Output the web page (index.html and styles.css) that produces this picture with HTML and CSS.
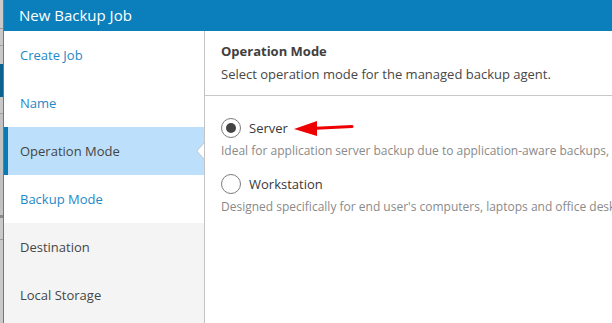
FILE: index.html
```html
<!DOCTYPE html>
<html>
<head>
<meta charset="utf-8">
<link rel="stylesheet" href="styles.css">
</head>
<body>
<div class="backdrop"></div>
<div class="modal">
  <div class="modal-header">New Backup Job</div>
  <div class="modal-body">
    <nav class="steps">
      <div class="step done">Create Job</div>
      <div class="step done">Name</div>
      <div class="step active">Operation Mode
        <svg class="notch" width="8" height="18" viewBox="0 0 8 18"><polygon points="8.5,0.5 0.8,9 8.5,17.5" fill="#fff" stroke="#c4c4c4" stroke-width="1"/></svg>
      </div>
      <div class="step done">Backup Mode</div>
      <div class="step">Destination</div>
      <div class="step">Local Storage</div>
    </nav>
    <section class="panel">
      <div class="panel-head">
        <div class="panel-title">Operation Mode</div>
        <div class="panel-sub">Select operation mode for the managed backup agent.</div>
      </div>
      <div class="options">
        <div class="option">
          <div class="radio-row">
            <span class="radio checked"></span>
            <span class="radio-label">Server</span>
            <svg class="arrow" width="60" height="18" viewBox="0 0 60 18"><path d="M58 7.6 L22 9.3" stroke="#ee0000" stroke-width="3" stroke-linecap="round" fill="none"/><polygon points="0,10 23,2 23,17" fill="#ee0000"/></svg>
          </div>
          <div class="desc">Ideal for application server backup due to application-aware backups, log truncation and automatic retries.</div>
        </div>
        <div class="option">
          <div class="radio-row">
            <span class="radio"></span>
            <span class="radio-label">Workstation</span>
          </div>
          <div class="desc">Designed specifically for end user's computers, laptops and office desktops.</div>
        </div>
      </div>
    </section>
  </div>
</div>
</body>
</html>
```

FILE: styles.css
```css
html, body {
  margin: 0;
  padding: 0;
  height: 100%;
}
body {
  display: flex;
  width: 612px;
  height: 323px;
  overflow: hidden;
  font-family: "Open Sans", "Liberation Sans", sans-serif;
  background: #fff;
}
.backdrop {
  width: 3px;
  flex: none;
  background: linear-gradient(to bottom,
    #c9c9c9 0, #c9c9c9 28px, #9a9a9a 28px, #9a9a9a 29px, #c9c9c9 29px,
    #c9c9c9 45px, #a0a0a0 45px, #a0a0a0 46px, #c9c9c9 46px,
    #c9c9c9 64px, #0b628e 64px, #0b628e 97px, #c9c9c9 97px,
    #c9c9c9 113px, #a0a0a0 113px, #a0a0a0 114px, #c2c2c2 114px,
    #c2c2c2 215px, #8a8a8a 215px, #8a8a8a 218px, #c9c9c9 218px,
    #c9c9c9 239px, #9a9a9a 239px, #9a9a9a 240px, #c9c9c9 240px);
}
.modal {
  flex: 1;
  display: flex;
  flex-direction: column;
  border-left: 1px solid #4a82a8;
  min-width: 0;
}
.modal-header {
  height: 31px;
  line-height: 31px;
  background: #0b7fbb;
  color: #fff;
  font-size: 15px;
  padding-left: 15px;
  flex: none;
}
.modal-body {
  flex: 1;
  display: flex;
  min-height: 0;
}
.steps {
  width: 200px;
  flex: none;
  background: #f4f4f4;
  border-right: 1px solid #c4c4c4;
  display: flex;
  flex-direction: column;
}
.step {
  position: relative;
  height: 48px;
  line-height: 48px;
  padding-left: 16px;
  font-size: 13px;
  color: #464646;
}
.step.done {
  background: #fff;
  color: #1f88c6;
}
.step.active {
  background: #bce0fb;
  color: #444;
  border-left: 4px solid #0a7ab4;
  padding-left: 12px;
}
.notch {
  position: absolute;
  right: 0;
  top: 15px;
  display: block;
}
.panel {
  flex: 1;
  min-width: 0;
  overflow: hidden;
  background: #fff;
}
.panel-head {
  padding: 11px 16px 12px;
  border-bottom: 1px solid #c8c8c8;
}
.panel-title {
  font-size: 13px;
  line-height: 18px;
  font-weight: 700;
  color: #404040;
  margin-bottom: 5px;
}
.panel-sub {
  font-size: 13px;
  line-height: 18px;
  color: #474747;
  white-space: nowrap;
}
.options {
  padding: 22px 0 0 16px;
  display: flex;
  flex-direction: column;
  gap: 15px;
}
.radio-row {
  display: flex;
  align-items: center;
  height: 20px;
}
.radio {
  box-sizing: border-box;
  width: 20px;
  height: 20px;
  border-radius: 50%;
  border: 1px solid #7d7d7d;
  background: #fff;
  display: flex;
  align-items: center;
  justify-content: center;
  flex: none;
}
.radio.checked::after {
  content: "";
  width: 10px;
  height: 10px;
  border-radius: 50%;
  background: #444;
}
.radio-label {
  margin-left: 8px;
  font-size: 13px;
  color: #383838;
}
.arrow {
  margin-left: 6px;
  display: block;
}
.desc {
  margin-top: 5px;
  font-size: 12px;
  line-height: 16px;
  color: #8a8a8a;
  white-space: nowrap;
}
```
